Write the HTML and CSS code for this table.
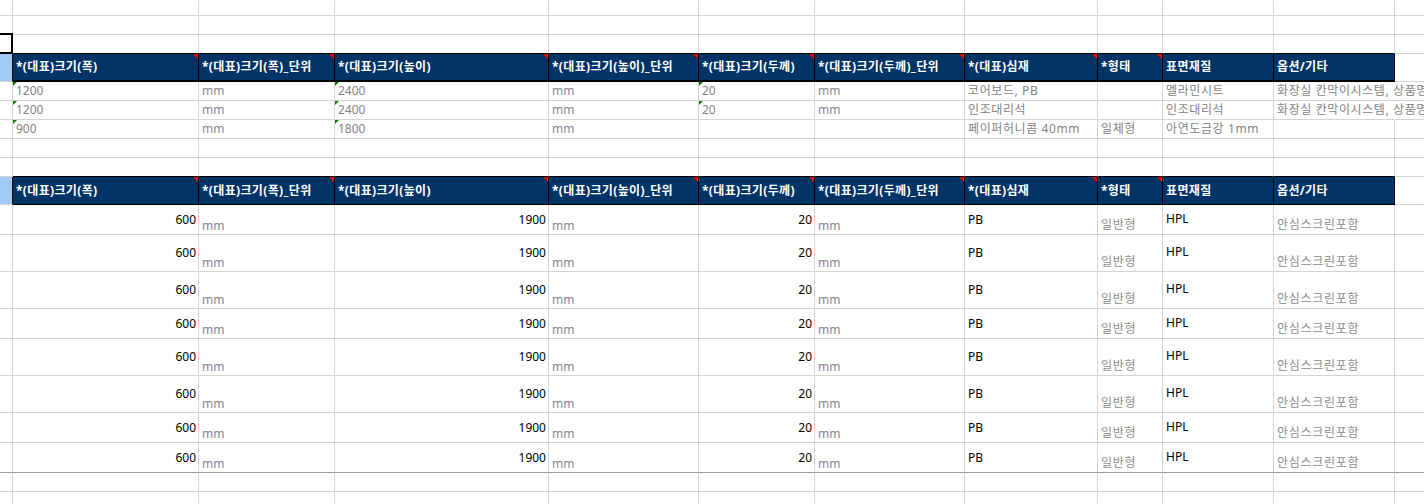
FILE: index.html
```html
<!DOCTYPE html>
<html lang="ko">
<head>
<meta charset="utf-8">
<title>Sheet</title>
<link rel="stylesheet" href="styles.css">
</head>
<body>
<div class="sheet">
  <div class="row h16"><div class="c"></div><div class="c"></div><div class="c"></div><div class="c"></div><div class="c"></div><div class="c"></div><div class="c"></div><div class="c"></div><div class="c"></div><div class="c"></div><div class="c"></div><div class="c"></div></div>
  <div class="row h19"><div class="c"></div><div class="c"></div><div class="c"></div><div class="c"></div><div class="c"></div><div class="c"></div><div class="c"></div><div class="c"></div><div class="c"></div><div class="c"></div><div class="c"></div><div class="c"></div></div>
  <div class="row h19 above-hdr"><div class="c"></div><div class="c"></div><div class="c"></div><div class="c"></div><div class="c"></div><div class="c"></div><div class="c"></div><div class="c"></div><div class="c"></div><div class="c"></div><div class="c"></div><div class="c"></div></div>

  <div class="row h28 hdr thick">
    <div class="c gutter"></div>
    <div class="c th note">*(대표)크기(폭)</div>
    <div class="c th note">*(대표)크기(폭)_단위</div>
    <div class="c th note">*(대표)크기(높이)</div>
    <div class="c th note">*(대표)크기(높이)_단위</div>
    <div class="c th note">*(대표)크기(두께)</div>
    <div class="c th note">*(대표)크기(두께)_단위</div>
    <div class="c th note">*(대표)심재</div>
    <div class="c th note">*형태</div>
    <div class="c th">표면재질</div>
    <div class="c th">옵션/기타</div>
    <div class="c"></div>
  </div>

  <div class="row h19">
    <div class="c"></div>
    <div class="c v tri">1200</div>
    <div class="c u">mm</div>
    <div class="c v tri">2400</div>
    <div class="c u">mm</div>
    <div class="c v tri">20</div>
    <div class="c u">mm</div>
    <div class="c v ko">코어보드, PB</div>
    <div class="c"></div>
    <div class="c v ko">멜라민시트</div>
    <div class="c v ko spill">화장실 칸막이시스템, 상품명 : 안심 칸막이</div>
    <div class="c"></div>
  </div>
  <div class="row h19">
    <div class="c"></div>
    <div class="c v tri">1200</div>
    <div class="c u">mm</div>
    <div class="c v tri">2400</div>
    <div class="c u">mm</div>
    <div class="c v tri">20</div>
    <div class="c u">mm</div>
    <div class="c v ko">인조대리석</div>
    <div class="c"></div>
    <div class="c v ko">인조대리석</div>
    <div class="c v ko spill">화장실 칸막이시스템, 상품명 : 안심 칸막이</div>
    <div class="c"></div>
  </div>
  <div class="row h19">
    <div class="c"></div>
    <div class="c v tri">900</div>
    <div class="c u">mm</div>
    <div class="c v tri">1800</div>
    <div class="c u">mm</div>
    <div class="c"></div>
    <div class="c"></div>
    <div class="c v ko">페이퍼허니콤 40mm</div>
    <div class="c v ko">일체형</div>
    <div class="c v ko">아연도금강 1mm</div>
    <div class="c"></div>
    <div class="c"></div>
  </div>

  <div class="row h19"><div class="c"></div><div class="c"></div><div class="c"></div><div class="c"></div><div class="c"></div><div class="c"></div><div class="c"></div><div class="c"></div><div class="c"></div><div class="c"></div><div class="c"></div><div class="c"></div></div>
  <div class="row h19 above-hdr"><div class="c"></div><div class="c"></div><div class="c"></div><div class="c"></div><div class="c"></div><div class="c"></div><div class="c"></div><div class="c"></div><div class="c"></div><div class="c"></div><div class="c"></div><div class="c"></div></div>

  <div class="row h28 hdr">
    <div class="c gutter"></div>
    <div class="c th note">*(대표)크기(폭)</div>
    <div class="c th note">*(대표)크기(폭)_단위</div>
    <div class="c th note">*(대표)크기(높이)</div>
    <div class="c th note">*(대표)크기(높이)_단위</div>
    <div class="c th note">*(대표)크기(두께)</div>
    <div class="c th note">*(대표)크기(두께)_단위</div>
    <div class="c th note">*(대표)심재</div>
    <div class="c th note">*형태</div>
    <div class="c th">표면재질</div>
    <div class="c th">옵션/기타</div>
    <div class="c"></div>
  </div>

  <div class="row h30">
    <div class="c"></div><div class="c n">600</div><div class="c ub">mm</div><div class="c n">1900</div><div class="c ub">mm</div><div class="c n">20</div><div class="c ub">mm</div><div class="c k">PB</div><div class="c gb">일반형</div><div class="c k hi">HPL</div><div class="c gb">안심스크린포함</div><div class="c"></div>
  </div>
  <div class="row h37">
    <div class="c"></div><div class="c n">600</div><div class="c ub">mm</div><div class="c n">1900</div><div class="c ub">mm</div><div class="c n">20</div><div class="c ub">mm</div><div class="c k">PB</div><div class="c gb">일반형</div><div class="c k hi">HPL</div><div class="c gb">안심스크린포함</div><div class="c"></div>
  </div>
  <div class="row h37">
    <div class="c"></div><div class="c n">600</div><div class="c ub">mm</div><div class="c n">1900</div><div class="c ub">mm</div><div class="c n">20</div><div class="c ub">mm</div><div class="c k">PB</div><div class="c gb">일반형</div><div class="c k hi">HPL</div><div class="c gb">안심스크린포함</div><div class="c"></div>
  </div>
  <div class="row h30">
    <div class="c"></div><div class="c n">600</div><div class="c ub">mm</div><div class="c n">1900</div><div class="c ub">mm</div><div class="c n">20</div><div class="c ub">mm</div><div class="c k">PB</div><div class="c gb">일반형</div><div class="c k hi">HPL</div><div class="c gb">안심스크린포함</div><div class="c"></div>
  </div>
  <div class="row h37">
    <div class="c"></div><div class="c n">600</div><div class="c ub">mm</div><div class="c n">1900</div><div class="c ub">mm</div><div class="c n">20</div><div class="c ub">mm</div><div class="c k">PB</div><div class="c gb">일반형</div><div class="c k hi">HPL</div><div class="c gb">안심스크린포함</div><div class="c"></div>
  </div>
  <div class="row h37">
    <div class="c"></div><div class="c n">600</div><div class="c ub">mm</div><div class="c n">1900</div><div class="c ub">mm</div><div class="c n">20</div><div class="c ub">mm</div><div class="c k">PB</div><div class="c gb">일반형</div><div class="c k hi">HPL</div><div class="c gb">안심스크린포함</div><div class="c"></div>
  </div>
  <div class="row h30">
    <div class="c"></div><div class="c n">600</div><div class="c ub">mm</div><div class="c n">1900</div><div class="c ub">mm</div><div class="c n">20</div><div class="c ub">mm</div><div class="c k">PB</div><div class="c gb">일반형</div><div class="c k hi">HPL</div><div class="c gb">안심스크린포함</div><div class="c"></div>
  </div>
  <div class="row h30 brk">
    <div class="c"></div><div class="c n">600</div><div class="c ub">mm</div><div class="c n">1900</div><div class="c ub">mm</div><div class="c n">20</div><div class="c ub">mm</div><div class="c k">PB</div><div class="c gb">일반형</div><div class="c k hi">HPL</div><div class="c gb">안심스크린포함</div><div class="c"></div>
  </div>

  <div class="row h19"><div class="c"></div><div class="c"></div><div class="c"></div><div class="c"></div><div class="c"></div><div class="c"></div><div class="c"></div><div class="c"></div><div class="c"></div><div class="c"></div><div class="c"></div><div class="c"></div></div>
  <div class="row h19"><div class="c"></div><div class="c"></div><div class="c"></div><div class="c"></div><div class="c"></div><div class="c"></div><div class="c"></div><div class="c"></div><div class="c"></div><div class="c"></div><div class="c"></div><div class="c"></div></div>

  <div class="selection"></div>
</div>
</body>
</html>
```

FILE: styles.css
```css
html, body {
  margin: 0;
  padding: 0;
  background: #fff;
  overflow: hidden;
}

.sheet {
  position: relative;
  width: 1424px;
  height: 504px;
  overflow: hidden;
  font-family: "Noto Sans", "Noto Sans CJK KR", sans-serif;
  font-size: 12px;
  color: #000;
}

.row {
  display: grid;
  grid-template-columns: 13px 186px 136px 214px 150px 116px 150px 133px 65px 111px 121px 40px;
}

.h16 { height: 16px; }
.h19 { height: 19px; }
.h28 { height: 28px; }
.h30 { height: 30px; }
.h37 { height: 37px; }

.c {
  position: relative;
  box-sizing: border-box;
  border-right: 1px solid #d4d4d4;
  border-bottom: 1px solid #d4d4d4;
  padding: 0 3px;
  display: flex;
  align-items: center;
  white-space: nowrap;
  overflow: hidden;
  line-height: 16px;
}

.above-hdr > .c:nth-child(n+2):nth-child(-n+11) {
  border-bottom-color: #000;
}

.brk > .c {
  border-bottom-color: #9c9c9c;
}

/* header rows */
.gutter {
  background: #9fcbf6;
  border-right-color: #000;
}

.th {
  background: #003366;
  color: #fff;
  font-weight: 700;
  letter-spacing: 0.35px;
  border-right-color: #000;
  border-bottom-color: #000;
}

.hdr.thick .th {
  border-bottom-width: 2px;
}

.note::after {
  content: "";
  position: absolute;
  top: 0;
  right: 0;
  width: 0;
  height: 0;
  border-top: 5px solid #ff0000;
  border-left: 5px solid transparent;
}

/* first data block */
.v { color: #838383; }
.u { color: #8d8494; }
.ko { letter-spacing: 0.6px; }

.tri::before {
  content: "";
  position: absolute;
  top: 0;
  left: 0;
  width: 0;
  height: 0;
  border-top: 4px solid #008000;
  border-right: 4px solid transparent;
}

.spill {
  overflow: visible;
  border-right-color: transparent;
  z-index: 1;
}

/* second data block */
.n {
  justify-content: flex-end;
  padding-right: 2px;
  color: #000;
}

.ub {
  align-items: flex-end;
  padding-bottom: 0;
  color: #8d8494;
}

.k { color: #000; }
.hi { padding-bottom: 2px; }

.gb {
  align-items: flex-end;
  padding-bottom: 1px;
  color: #8c8c8c;
  letter-spacing: 0.7px;
}

/* active-cell selection frame */
.selection {
  position: absolute;
  left: -3px;
  top: 33px;
  width: 16px;
  height: 21px;
  box-sizing: border-box;
  border: 2px solid #000;
}
```
